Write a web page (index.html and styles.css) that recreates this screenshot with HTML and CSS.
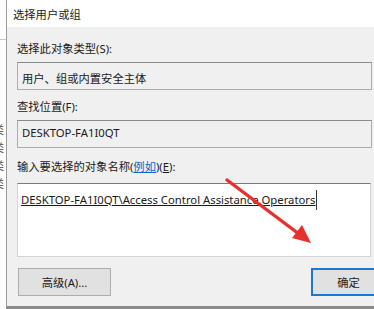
FILE: index.html
```html
<!DOCTYPE html>
<html lang="zh">
<head>
<meta charset="utf-8">
<title>选择用户或组</title>
<link rel="stylesheet" href="styles.css">
</head>
<body>
<div class="screen">
  <div class="behind">
    <div class="behind-line"></div>
    <div class="behind-glyphs">
      <span>类</span><span>类</span><span>类</span><span>类</span>
    </div>
  </div>
  <div class="dialog">
    <div class="titlebar">选择用户或组</div>
    <div class="body">
      <div class="label">选择此对象类型(S):</div>
      <div class="box box-type">用户、组或内置安全主体</div>
      <div class="label label-2">查找位置(F):</div>
      <div class="box box-loc">DESKTOP-FA1I0QT</div>
      <div class="label label-3">输入要选择的对象名称(<a class="link">例如</a>)(<u>E</u>):</div>
      <div class="textarea">
        <span class="entry"><u>DESKTOP-FA1I0QT\Access Control Assistance Operators</u></span><span class="caret"></span>
      </div>
      <div class="buttons">
        <button class="btn">高级(A)...</button>
        <button class="btn btn-default">确定</button>
      </div>
    </div>
  </div>
</div>
<svg class="arrow" width="374" height="309" viewBox="0 0 374 309">
  <line x1="227" y1="180" x2="299" y2="234" stroke="#e8302c" stroke-width="3.4" stroke-linecap="round"/>
  <polygon points="311,243 292,238 302,225" fill="#e8302c"/>
</svg>
</body>
</html>
```

FILE: styles.css
```css
html, body {
  margin: 0;
  padding: 0;
}
body {
  width: 374px;
  height: 309px;
  overflow: hidden;
  background: #ffffff;
  font-family: "Noto Sans", "Noto Sans CJK SC", sans-serif;
  font-size: 11.3px;
  color: #1a1a1a;
  position: relative;
}
.screen {
  display: flex;
  width: 374px;
  height: 309px;
}
.behind {
  width: 6px;
  flex: none;
  overflow: hidden;
  background: #fdfdfd;
}
.behind-line {
  margin-top: 39px;
  height: 1px;
  background: #c8c8c8;
}
.behind-glyphs {
  margin-top: 80px;
  margin-left: -7px;
  display: flex;
  flex-direction: column;
  font-family: "Noto Sans CJK SC", sans-serif;
  font-size: 11px;
  line-height: 18px;
  color: #444;
}
.dialog {
  flex: none;
  width: 380px;
  height: 306px;
  border-left: 1px solid #9a9a9a;
  border-bottom: 3px solid #8a8a8a;
  background: #f0f0f0;
  display: flex;
  flex-direction: column;
}
.titlebar {
  height: 27px;
  background: #ffffff;
  padding-left: 6px;
  line-height: 29px;
  font-family: "Noto Sans CJK SC", sans-serif;
  font-size: 11.3px;
  color: #1a1a1a;
}
.body {
  padding: 14px 0 0 10px;
  display: flex;
  flex-direction: column;
}
.label {
  height: 16px;
  line-height: 16px;
}
.label-2 {
  margin-top: 9px;
}
.label-3 {
  margin-top: 11px;
}
u {
  text-decoration: underline;
}
.link {
  color: #0a64c8;
  text-decoration: underline;
}
.box {
  box-sizing: border-box;
  width: 355px;
  height: 28px;
  margin-top: 5px;
  border: 1px solid #adadad;
  border-top-color: #8a8a8a;
  padding: 0 0 0 4px;
}
.box-type {
  padding-top: 7px;
  line-height: 18px;
}
.box-loc {
  margin-top: 5px;
  padding-top: 3px;
  line-height: 18px;
}
.textarea {
  box-sizing: border-box;
  width: 354px;
  height: 74px;
  margin-top: 8px;
  background: #ffffff;
  border: 1px solid #d4d4d4;
  border-top-color: #7a7a7a;
  padding: 6px 0 0 3px;
  display: flex;
  align-items: flex-start;
}
.entry {
  line-height: 20px;
  color: #1a1a1a;
}
.caret {
  width: 1px;
  height: 20px;
  background: #333;
  margin-left: 1px;
}
.buttons {
  display: flex;
  gap: 200px;
  margin-top: 11px;
  padding-left: 1px;
}
.btn {
  box-sizing: border-box;
  flex: none;
  height: 28px;
  width: 93px;
  background: #e1e1e1;
  border: 1px solid #adadad;
  font-family: "Noto Sans", "Noto Sans CJK SC", sans-serif;
  font-size: 11.3px;
  color: #1a1a1a;
  padding: 0;
  margin: 0;
}
.btn-default {
  width: 75px;
  border: 2px solid #1a78d2;
}
.arrow {
  position: absolute;
  left: 0;
  top: 0;
  pointer-events: none;
}
```
